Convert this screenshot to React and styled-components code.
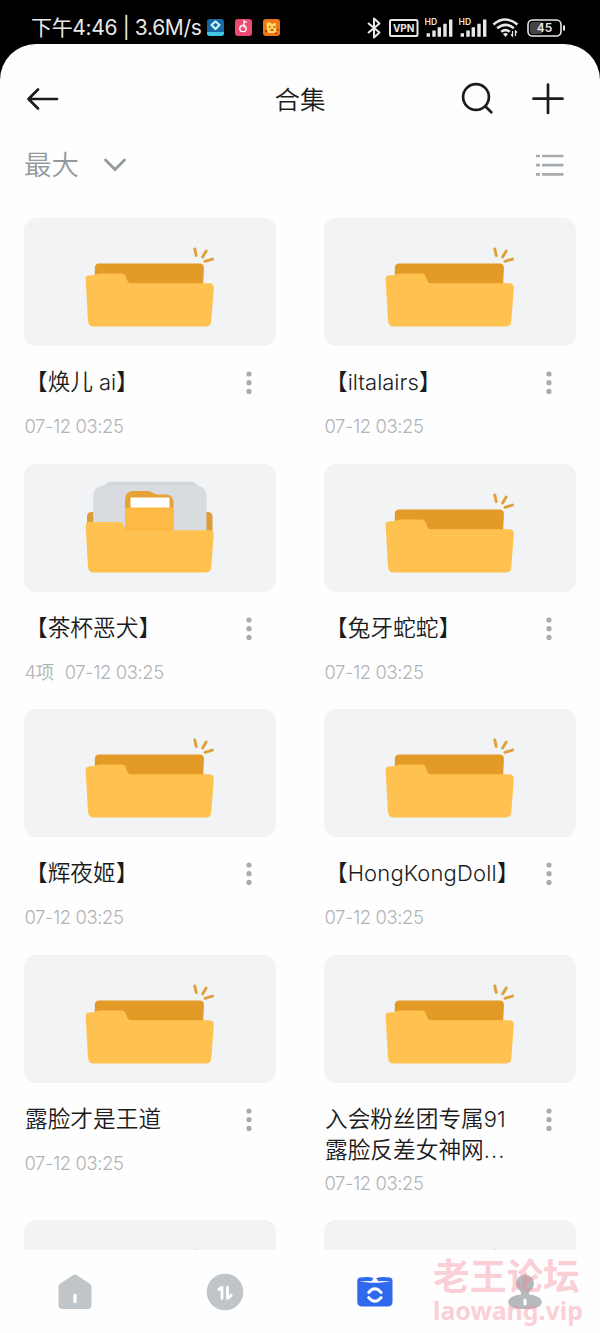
import React from "react";
import styled, { createGlobalStyle } from "styled-components";

const GlobalStyle = createGlobalStyle`
  * {
    box-sizing: border-box;
  }
  body {
    margin: 0;
    background-color: #000;
    font-family: Inter, "Noto Sans CJK SC", sans-serif;
  }
  svg {
    display: block;
  }
`;

// CSS
const Screen = styled.div`
  position: relative;
  display: flex;
  flex-direction: column;
  width: 600px;
  height: 1333px;
  overflow: hidden;
  background-color: #000;
`;

const StatusBlock = styled.div`
  flex: none;
  display: flex;
  align-items: center;
  height: 44px;
  padding: 11px 34px 0 31px;
  color: #e8e8e8;
`;

const StatusText = styled.span`
  width: 175px;
  padding-bottom: 3px;
  font-size: 21px;
  letter-spacing: -0.35px;
  white-space: nowrap;
`;

const AppIcons = styled.div`
  display: flex;
  gap: 9px;
  flex: 1;
`;

const SystemIcons = styled.div`
  display: flex;
  align-items: center;
`;

const Sheet = styled.div`
  flex: 1;
  min-height: 0;
  display: flex;
  flex-direction: column;
  background-color: #fefefe;
  border-radius: 36px 36px 0 0;
`;

const HeaderBlock = styled.div`
  flex: none;
  display: grid;
  grid-template-columns: 1fr auto 1fr;
  align-items: center;
  height: 110px;
  padding: 0 35px 0 26px;
`;

const HeaderTitle = styled.h1`
  margin: 0;
  padding: 0 0 4px 9px;
  font-size: 25.5px;
  font-weight: 350;
  color: #1c1c1c;
`;

const HeaderActions = styled.div`
  display: flex;
  justify-content: flex-end;
  gap: 36px;
`;

const SortBlock = styled.div`
  flex: none;
  display: flex;
  align-items: center;
  justify-content: space-between;
  height: 22px;
  padding: 0 35px 0 24px;
  color: #929a9e;
`;

const SortLabel = styled.div`
  display: flex;
  align-items: center;
  gap: 23px;
  font-size: 27.5px;
  font-weight: 350;
  line-height: 22px;
`;

const FolderGrid = styled.div`
  flex: 1;
  min-height: 0;
  overflow: hidden;
  display: grid;
  grid-template-columns: 252px 252px;
  column-gap: 48px;
  row-gap: 26.5px;
  align-content: start;
  padding: 42.4px 24px 0;
`;

const Thumb = styled.div`
  height: 128px;
  margin-bottom: 20px;
  border-radius: 12px;
  background-color: #f1f3f4;
  overflow: hidden;
`;

const TitleRow = styled.div`
  display: flex;
  justify-content: space-between;
  min-height: 42px;
  padding: 0 24.5px 0 1px;
`;

const Title = styled.div`
  font-size: 22.7px;
  font-weight: 350;
  line-height: 31px;
  color: #1b1b1b;
  white-space: pre;
`;

const Latin = styled.span`
  font-size: 22px;
  line-height: 1;
  letter-spacing: ${(props) => props.$spacing || 0}px;
`;

const Meta = styled.div`
  display: flex;
  gap: 11px;
  margin-top: 7px;
  padding-left: 0.5px;
  font-size: 18.4px;
  font-weight: 350;
  line-height: 22px;
  letter-spacing: -0.38px;
  color: #b1b3b6;
  white-space: nowrap;
`;

const TabBar = styled.div`
  flex: none;
  display: grid;
  grid-template-columns: repeat(4, 1fr);
  justify-items: center;
  height: 83px;
  padding-top: 22px;
  background-color: #fefefe;
`;

const Watermark = styled.div`
  position: absolute;
  left: 433px;
  top: 1255px;
  font-weight: 700;
  color: rgba(245, 130, 145, 0.4);
  white-space: nowrap;
`;

const WatermarkName = styled.div`
  font-family: "Noto Sans CJK SC", sans-serif;
  font-size: 36.7px;
  line-height: 38px;
`;

const WatermarkSite = styled.div`
  font-family: "Noto Sans", sans-serif;
  font-size: 24.9px;
  line-height: 34px;
`;

// 空文件夹
const EmptyFolder = () => (
  <svg width="251" height="128" viewBox="0 0 251 128">
    <path d="M70.8 70V50q0-4.500 4.500-4.500H175.500q4.500 0 4.400 4.500L179 70Z" fill="#e39a27" />
    <path
      d="M61.600 61q-.1-3.500 3.400-3.600L71 57q2-1.500 5-1.500H98q2.700 0 3.600 2.500l1.600 4.500q1 2.700 3.600 2.700H185q5 0 4.800 5L187.300 103q-.4 5.500-5.500 5.500H69.500q-5 0-5.500-5.500Z"
      fill="#ffc250"
    />
    <g stroke="#dfa03c" strokeWidth="2.900" strokeLinecap="round">
      <path d="M170.800 31l1.400 6.500M182.200 33l-3.600 6M181 43.300l7.500-2.200" />
    </g>
  </svg>
);

// 有内容的文件夹
const FilledFolder = () => (
  <svg width="251" height="128" viewBox="0 0 251 128">
    <path d="M63 70V53q0-5 5-5H183.500q5 0 5 5V70Z" fill="#dd9d36" />
    <path d="M79 24q3-6.300 9-6.300H166q6 0 9 6.300Z" fill="#d2d5da" />
    <path d="M69.200 70V33q0-11.500 11.500-11.500H171q11.500 0 11.500 11.500V70Z" fill="#d8dbe0" />
    <path d="M101 66V36q0-9 9-9h13c5 0 6 3.400 11 3.400h7q8.500 0 8.500 8V66Z" fill="#e6a236" />
    <path d="M106.500 33.500h39v11h-39Z" fill="#fff" />
    <path
      d="M61.600 62q0-4 4-4H96q2 0 3 2l2 4q1 2.300 3.600 2.300H186q3.800 0 3.700 4L187.300 103q-.4 5.500-5.500 5.500H69.500q-5 0-5.500-5.500Z"
      fill="#ffc250"
    />
    <path d="M101 43.500h48.500V67H101Z" fill="#ffba45" />
  </svg>
);

const MoreDots = () => (
  <svg width="6" height="33" viewBox="0 0 6 33" fill="#a9abad">
    <circle cx="3" cy="8" r="2.600" />
    <circle cx="3" cy="16.700" r="2.600" />
    <circle cx="3" cy="25.400" r="2.600" />
  </svg>
);

const Signal = () => (
  <svg width="33.500" height="20" viewBox="0 0 33.500 20">
    <text x="-0.500" y="7.300" fontSize="8.600" fontWeight="600" fill="#e8e8e8">
      HD
    </text>
    <path
      d="M3.300 15.200v3.600M9 12.500v6.300M14.300 9.200v9.600M20 5.800v13M25.700 1.500v17.300"
      stroke="#e8e8e8"
      strokeWidth="3.400"
      strokeLinecap="butt"
    />
  </svg>
);

const StatusBar = () => (
  <StatusBlock>
    <StatusText>下午4:46 | 3.6M/s</StatusText>
    <AppIcons>
      <svg width="19" height="19" viewBox="0 0 19 19">
        <rect x="1" y="1" width="17" height="17" rx="3" fill="#1769a5" />
        <path d="M1 14h17v1q0 3-3 3H4q-3 0-3-3Z" fill="#43c8e4" />
        <path d="M9.500 3.500l4 3.500-4 4-4-4Z" fill="none" stroke="#c9f2fa" strokeWidth="2.200" strokeLinejoin="round" />
      </svg>
      <svg width="19" height="19" viewBox="0 0 19 19">
        <rect x="1" y="1" width="17" height="17" rx="3" fill="#ec4a70" />
        <circle cx="9" cy="10.500" r="3.200" fill="none" stroke="#fff" strokeWidth="1.300" />
        <path d="M10 10V3l3 1.500" fill="none" stroke="#fff" strokeWidth="1.300" />
      </svg>
      <svg width="19" height="19" viewBox="0 0 19 19">
        <rect x="1" y="1" width="17" height="17" rx="3" fill="#ee7518" />
        <path d="M4.500 5l3-1 2.500 2 4-1.500-.5 4.500 1 4.500-3 1.500H6.500L5 12Z" fill="#ffd75a" />
        <path d="M7 9h1.500M11.500 9H13M8.500 12h3" stroke="#a63d10" strokeWidth="1.300" />
        <path d="M3 13h2M15 12h1.500M13.500 15.500h1.500" stroke="#8a2f0c" strokeWidth="1.500" />
      </svg>
    </AppIcons>
    <SystemIcons>
      <svg width="22" height="22" viewBox="0 0 22 22">
        <path d="M1 6l11.500 9.500-5.500 5V1.500l5.500 5L1 16" fill="none" stroke="#e8e8e8" strokeWidth="2" strokeLinejoin="round" />
      </svg>
      <svg width="36" height="20" viewBox="0 0 36 20">
        <rect x="1" y="2" width="27.500" height="16" rx="1.500" fill="none" stroke="#e8e8e8" strokeWidth="2" />
        <text x="14.700" y="13.700" fontSize="10" fontWeight="700" textAnchor="middle" fill="#e8e8e8">
          VPN
        </text>
      </svg>
      <Signal />
      <Signal />
      <svg width="35" height="22" viewBox="0 0 35 22">
        <g fill="none" stroke="#e8e8e8" strokeWidth="2.600">
          <path d="M1.500 7.500q11.500-10 24 0M5.200 11.300q8.300-7 16.600 0M9.200 14.800q4.300-3.500 8.600 0" />
        </g>
        <path d="M11 17q2.500-2 5 0l-2.500 3Z" fill="#e8e8e8" />
        <path d="M20.500 14v5l-1.500-1.500M23.500 19v-5l1.500 1.500" fill="none" stroke="#e8e8e8" strokeWidth="1.300" />
      </svg>
      <svg width="39" height="20" viewBox="0 0 39 20">
        <rect x="3" y="4" width="13" height="12" rx="3" fill="#444" />
        <rect x="1" y="2" width="33" height="16" rx="4.500" fill="none" stroke="#e8e8e8" strokeWidth="1.600" />
        <path d="M37 7.500v5" stroke="#e8e8e8" strokeWidth="2" />
        <text x="17.500" y="14.300" fontSize="12" fontWeight="600" textAnchor="middle" fill="#e8e8e8">
          45
        </text>
      </svg>
    </SystemIcons>
  </StatusBlock>
);

const Header = () => (
  <HeaderBlock>
    <svg width="34" height="24" viewBox="0 0 34 24">
      <path d="M12 2.500L2.500 12 12 21.500M3 12H31" fill="none" stroke="#1c1c1c" strokeWidth="2.700" strokeLinecap="round" strokeLinejoin="round" />
    </svg>
    <HeaderTitle>合集</HeaderTitle>
    <HeaderActions>
      <svg width="34" height="34" viewBox="0 0 34 34">
        <circle cx="15" cy="15" r="12.900" fill="none" stroke="#1c1c1c" strokeWidth="2.700" />
        <path d="M24.500 24.500l5.800 5.800" stroke="#1c1c1c" strokeWidth="2.700" strokeLinecap="round" />
      </svg>
      <svg width="34" height="34" viewBox="0 0 34 34">
        <path d="M17 2.500v28.500M2.500 16.700H31.500" stroke="#1c1c1c" strokeWidth="2.700" strokeLinecap="round" />
      </svg>
    </HeaderActions>
  </HeaderBlock>
);

const SortBar = () => (
  <SortBlock>
    <SortLabel>
      最大
      <svg width="24" height="16" viewBox="0 0 24 16">
        <path d="M3.500 3l9.500 9.500L22.500 3" fill="none" stroke="#929a9e" strokeWidth="2.700" strokeLinecap="round" />
      </svg>
    </SortLabel>
    <svg width="30" height="24" viewBox="0 0 30 24">
      <path d="M1 3h4M7 3h21.500M1 12.200h4M7 12.200h21.500M1 21.300h4M7 21.300h21.500" stroke="#a5abaf" strokeWidth="2.700" />
    </svg>
  </SortBlock>
);

const DATE = "07-12 03:25";

const folders = [
  { id: 1, title: <>【焕儿<Latin $spacing={-0.2}> ai</Latin>】</> },
  { id: 2, title: <>【<Latin>iltalairs</Latin>】</> },
  { id: 3, title: "【茶杯恶犬】", count: "4项" },
  { id: 4, title: "【兔牙蛇蛇】" },
  { id: 5, title: "【辉夜姬】" },
  { id: 6, title: <>【<Latin $spacing={0.15}>HongKongDoll</Latin>】</> },
  { id: 7, title: "露脸才是王道" },
  { id: 8, title: <>入会粉丝团专属<Latin>91</Latin>{"\n"}露脸反差女神网<Latin $spacing={1}>...</Latin></> },
];

const FolderCard = ({ folder }) => (
  <div>
    <Thumb>{folder.count ? <FilledFolder /> : <EmptyFolder />}</Thumb>
    <TitleRow>
      <Title>{folder.title}</Title>
      <MoreDots />
    </TitleRow>
    <Meta>
      {folder.count && <span>{folder.count}</span>}
      <span>{DATE}</span>
    </Meta>
  </div>
);

const BottomTabs = () => (
  <TabBar>
    <svg width="40" height="40" viewBox="0 0 40 40">
      <path d="M18 3.200q2-1.300 4 0L34.500 11.500q2 1.300 2 3.500V33q0 4-4 4H7.500q-4 0-4-4V15q0-2.200 2-3.500Z" fill="#bfc5c8" />
      <path d="M20 23.500v6" stroke="#fff" strokeWidth="3.300" strokeLinecap="round" />
    </svg>
    <svg width="40" height="40" viewBox="0 0 40 40">
      <circle cx="20" cy="20" r="18.300" fill="#bfc5c8" />
      <path d="M13.800 17.500l3.200-2.300V26.500M22.500 15.200V26.300l3.700-3" fill="none" stroke="#fff" strokeWidth="2.800" strokeLinecap="round" strokeLinejoin="round" />
    </svg>
    <svg width="40" height="40" viewBox="0 0 40 40">
      <path d="M2.300 9q0-3.200 3-3.500Q13 4.200 18.500 6h3Q27 4.200 34.500 5.500q3 .3 3 3.500V29.500q0 5-5 5H7.300q-5 0-5-5Z" fill="#2f69ee" />
      <path d="M4 10Q11 8.600 16.500 9.200L19.900 4l3.400 5.200Q29 8.600 36 10 29 9.600 24 10.700H15.800Q11 9.600 4 10Z" fill="#fff" />
      <path d="M13.600 20.500q6.300-7.500 12.600 0M13.600 25.500q6.300 7.500 12.600 0" fill="none" stroke="#fff" strokeWidth="2.800" strokeLinecap="round" />
    </svg>
    <svg width="40" height="40" viewBox="0 0 40 40">
      <circle cx="20" cy="11.500" r="9" fill="#b4babd" />
      <path d="M13 16h14q-3.500 3.500-3 6.500 12.800 1.500 12.800 7.500 0 7-16.800 7T3.200 30q0-6 12.800-7.500.5-3-3-6.500Z" fill="#b4babd" />
      <path d="M20 28v4" stroke="#fff" strokeWidth="3" strokeLinecap="round" />
    </svg>
  </TabBar>
);

const App = () => {
  return (
    <>
      <GlobalStyle />
      <Screen>
        <StatusBar />
        <Sheet>
          <Header />
          <SortBar />
          <FolderGrid>
            {folders.map((folder) => (
              <FolderCard key={folder.id} folder={folder} />
            ))}
            <Thumb>
              <EmptyFolder />
            </Thumb>
            <Thumb>
              <EmptyFolder />
            </Thumb>
          </FolderGrid>
          <BottomTabs />
        </Sheet>
        <Watermark>
          <WatermarkName>老王论坛</WatermarkName>
          <WatermarkSite>laowang.vip</WatermarkSite>
        </Watermark>
      </Screen>
    </>
  );
};

export default App;
